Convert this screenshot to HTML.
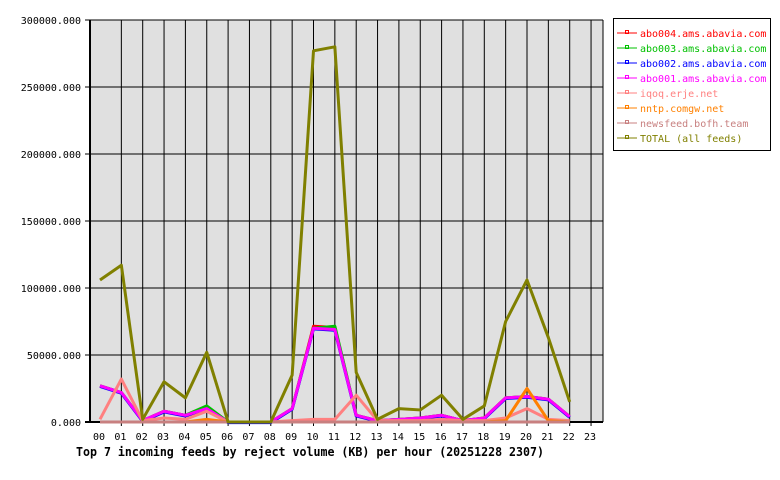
<!DOCTYPE html>
<html><head><meta charset="utf-8"><style>
html,body{margin:0;padding:0;background:#fff;}
svg{display:block;font-family:"DejaVu Sans Mono","Liberation Mono",monospace;}
</style></head><body>
<svg width="780" height="480" viewBox="0 0 780 480" xmlns="http://www.w3.org/2000/svg">
<rect x="90" y="20" width="513" height="402" fill="#e0e0e0"/>
<g stroke="#000" stroke-width="1">
<line x1="85" y1="20" x2="603" y2="20"/>
<line x1="85" y1="87" x2="603" y2="87"/>
<line x1="85" y1="154" x2="603" y2="154"/>
<line x1="85" y1="221" x2="603" y2="221"/>
<line x1="85" y1="288" x2="603" y2="288"/>
<line x1="85" y1="355" x2="603" y2="355"/>
<line x1="603" y1="20" x2="603" y2="422"/>
</g>
<g stroke="#000" stroke-width="1" id="vg"></g>
<line x1="90" y1="20" x2="90" y2="423" stroke="#000" stroke-width="2"/>
<line x1="85" y1="422" x2="603" y2="422" stroke="#000" stroke-width="2"/>
<g font-size="10" text-anchor="end" fill="#000">
<text x="81" y="24">300000.000</text>
<text x="81" y="91">250000.000</text>
<text x="81" y="158">200000.000</text>
<text x="81" y="225">150000.000</text>
<text x="81" y="292">100000.000</text>
<text x="81" y="359">50000.000</text>
<text x="81" y="426">0.000</text>
</g>
<g id="xl" font-size="10" text-anchor="middle"></g>
<g id="lines" fill="none" stroke-width="3" stroke-linejoin="round"></g>
<text x="76" y="456" font-size="12" font-weight="bold" textLength="468" lengthAdjust="spacingAndGlyphs">Top 7 incoming feeds by reject volume (KB) per hour (20251228 2307)</text>
<rect x="613.5" y="18.5" width="157" height="132" fill="#fff" stroke="#000"/>
<g font-size="10">
<g stroke-width="1" fill="none">
<line x1="617" x2="637" y1="33" y2="33" stroke="#ff0000"/><rect x="625.5" y="30.5" width="3" height="3" stroke="#ff0000"/>
<line x1="617" x2="637" y1="48" y2="48" stroke="#00c000"/><rect x="625.5" y="45.5" width="3" height="3" stroke="#00c000"/>
<line x1="617" x2="637" y1="63" y2="63" stroke="#0000ff"/><rect x="625.5" y="60.5" width="3" height="3" stroke="#0000ff"/>
<line x1="617" x2="637" y1="78" y2="78" stroke="#ff00ff"/><rect x="625.5" y="75.5" width="3" height="3" stroke="#ff00ff"/>
<line x1="617" x2="637" y1="93" y2="93" stroke="#ff8080"/><rect x="625.5" y="90.5" width="3" height="3" stroke="#ff8080"/>
<line x1="617" x2="637" y1="108" y2="108" stroke="#ff8000"/><rect x="625.5" y="105.5" width="3" height="3" stroke="#ff8000"/>
<line x1="617" x2="637" y1="123" y2="123" stroke="#c88080"/><rect x="625.5" y="120.5" width="3" height="3" stroke="#c88080"/>
<line x1="617" x2="637" y1="138" y2="138" stroke="#808000"/><rect x="625.5" y="135.5" width="3" height="3" stroke="#808000"/>
</g>
<text x="640" y="37" fill="#ff0000">abo004.ams.abavia.com</text>
<text x="640" y="52" fill="#00c000">abo003.ams.abavia.com</text>
<text x="640" y="67" fill="#0000ff">abo002.ams.abavia.com</text>
<text x="640" y="82" fill="#ff00ff">abo001.ams.abavia.com</text>
<text x="640" y="97" fill="#ff8080">iqoq.erje.net</text>
<text x="640" y="112" fill="#ff8000">nntp.comgw.net</text>
<text x="640" y="127" fill="#c88080">newsfeed.bofh.team</text>
<text x="640" y="142" fill="#808000">TOTAL (all feeds)</text>
</g>
<script>
var X=h=>100+21.35*h, Y=v=>422-v*0.00134;
var vg=document.getElementById('vg'),xl=document.getElementById('xl'),ns='http://www.w3.org/2000/svg';
for(var h=0;h<24;h++){var x=X(h);
 if(h>0){var l=document.createElementNS(ns,'line');l.setAttribute('x1',x);l.setAttribute('x2',x);l.setAttribute('y1',20);l.setAttribute('y2',426);vg.appendChild(l);}
 var t=document.createElementNS(ns,'text');t.setAttribute('x',x-1);t.setAttribute('y',440);t.textContent=(h<10?'0':'')+h;xl.appendChild(t);}
var abo=[27000,22000,1000,8000,5000,10000,0,0,0,10000,70000,69000,5000,1000,2000,3000,5000,1000,3000,18000,19000,17000,4000];
var d=[
['#ff0000',abo.map((v,i)=>i==10||i==11?v+1500:v)],
['#00c000',abo.map((v,i)=>i==5?v+2000:(i==11?v+2500:v))],
['#0000ff',abo.map(v=>v-500)],
['#ff00ff',abo],
['#ff8080',[2000,32000,1000,3000,2000,8000,0,0,0,1000,2000,2000,20000,1000,1000,1000,2000,1000,1000,3000,10000,2000,1000]],
['#ff8000',[0,0,0,0,0,2000,0,0,0,0,0,0,0,0,0,0,0,0,0,1000,25000,1000,0]],
['#c88080',[0,0,0,0,0,0,0,0,0,0,0,0,0,0,0,0,0,0,0,0,0,0,0]],
['#808000',[106000,117000,2000,30000,18000,52000,0,0,0,35000,277000,280000,37000,2000,10000,9000,20000,2000,12000,75000,106000,63000,15000]]];
var g=document.getElementById('lines');
d.forEach(s=>{var p=document.createElementNS(ns,'polyline');p.setAttribute('stroke',s[0]);p.setAttribute('points',s[1].map((v,i)=>X(i)+','+Y(v)).join(' '));g.appendChild(p);});
</script>
</svg>
</body></html>
